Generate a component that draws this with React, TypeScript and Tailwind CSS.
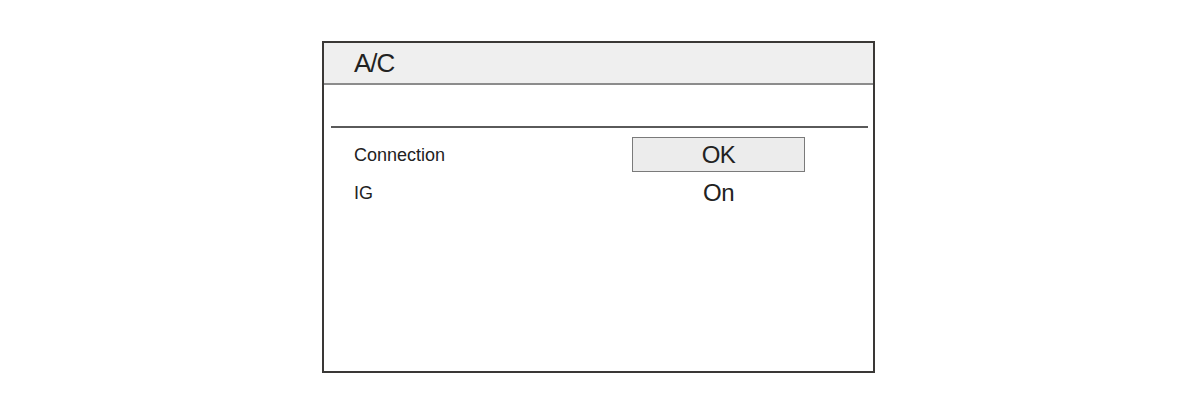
import React from "react";

export default function App() {
  return (
    <div
      className="w-[1200px] h-[414px] bg-white pl-[322px] pt-[41px] text-[#222]"
      style={{ fontFamily: '"Liberation Sans", Arial, sans-serif' }}
    >
      <div className="w-[553px] h-[332px] border-2 border-[#3a3836] flex flex-col">
        <div className="h-[42px] bg-[#efefef] border-b-2 border-[#8c8c8c] pl-[30px] flex items-center">
          <span className="text-[26px] tracking-[-1px] leading-none">A/C</span>
        </div>
        <div className="h-[41px]" />
        <div className="h-[2px] bg-[#5a5a5a] ml-[7px] mr-[5px]" />
        <div className="pl-[30px] pt-[9px] grid grid-cols-[278px_173px] items-center">
          <div className="text-[18px] leading-none">Connection</div>
          <div className="h-[35px] border-[1.5px] border-[#7a7a7a] bg-[#ececec] flex items-center justify-center">
            <span className="text-[24px] leading-none tracking-[-0.5px]">OK</span>
          </div>
          <div className="h-[42px] flex items-center text-[18px] leading-none">IG</div>
          <div className="h-[42px] flex items-center justify-center">
            <span className="text-[24px] leading-none tracking-[-0.5px]">On</span>
          </div>
        </div>
      </div>
    </div>
  );
}
